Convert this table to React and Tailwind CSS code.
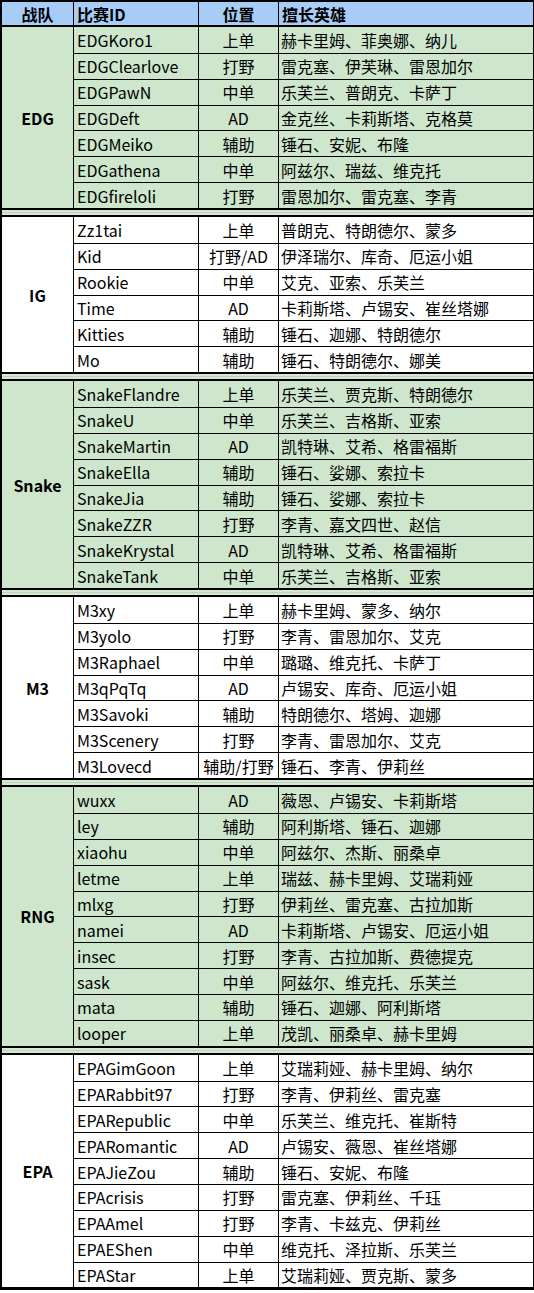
import React from "react";

const groups = [
  {
    team: "EDG",
    green: true,
    rows: [
      ["EDGKoro1", "上单", "赫卡里姆、菲奥娜、纳儿"],
      ["EDGClearlove", "打野", "雷克塞、伊芙琳、雷恩加尔"],
      ["EDGPawN", "中单", "乐芙兰、普朗克、卡萨丁"],
      ["EDGDeft", "AD", "金克丝、卡莉斯塔、克格莫"],
      ["EDGMeiko", "辅助", "锤石、安妮、布隆"],
      ["EDGathena", "中单", "阿兹尔、瑞兹、维克托"],
      ["EDGfireloli", "打野", "雷恩加尔、雷克塞、李青"],
    ],
  },
  {
    team: "IG",
    green: false,
    rows: [
      ["Zz1tai", "上单", "普朗克、特朗德尔、蒙多"],
      ["Kid", "打野/AD", "伊泽瑞尔、库奇、厄运小姐"],
      ["Rookie", "中单", "艾克、亚索、乐芙兰"],
      ["Time", "AD", "卡莉斯塔、卢锡安、崔丝塔娜"],
      ["Kitties", "辅助", "锤石、迦娜、特朗德尔"],
      ["Mo", "辅助", "锤石、特朗德尔、娜美"],
    ],
  },
  {
    team: "Snake",
    green: true,
    rows: [
      ["SnakeFlandre", "上单", "乐芙兰、贾克斯、特朗德尔"],
      ["SnakeU", "中单", "乐芙兰、吉格斯、亚索"],
      ["SnakeMartin", "AD", "凯特琳、艾希、格雷福斯"],
      ["SnakeElla", "辅助", "锤石、娑娜、索拉卡"],
      ["SnakeJia", "辅助", "锤石、娑娜、索拉卡"],
      ["SnakeZZR", "打野", "李青、嘉文四世、赵信"],
      ["SnakeKrystal", "AD", "凯特琳、艾希、格雷福斯"],
      ["SnakeTank", "中单", "乐芙兰、吉格斯、亚索"],
    ],
  },
  {
    team: "M3",
    green: false,
    rows: [
      ["M3xy", "上单", "赫卡里姆、蒙多、纳尔"],
      ["M3yolo", "打野", "李青、雷恩加尔、艾克"],
      ["M3Raphael", "中单", "璐璐、维克托、卡萨丁"],
      ["M3qPqTq", "AD", "卢锡安、库奇、厄运小姐"],
      ["M3Savoki", "辅助", "特朗德尔、塔姆、迦娜"],
      ["M3Scenery", "打野", "李青、雷恩加尔、艾克"],
      ["M3Lovecd", "辅助/打野", "锤石、李青、伊莉丝"],
    ],
  },
  {
    team: "RNG",
    green: true,
    rows: [
      ["wuxx", "AD", "薇恩、卢锡安、卡莉斯塔"],
      ["ley", "辅助", "阿利斯塔、锤石、迦娜"],
      ["xiaohu", "中单", "阿兹尔、杰斯、丽桑卓"],
      ["letme", "上单", "瑞兹、赫卡里姆、艾瑞莉娅"],
      ["mlxg", "打野", "伊莉丝、雷克塞、古拉加斯"],
      ["namei", "AD", "卡莉斯塔、卢锡安、厄运小姐"],
      ["insec", "打野", "李青、古拉加斯、费德提克"],
      ["sask", "中单", "阿兹尔、维克托、乐芙兰"],
      ["mata", "辅助", "锤石、迦娜、阿利斯塔"],
      ["looper", "上单", "茂凯、丽桑卓、赫卡里姆"],
    ],
  },
  {
    team: "EPA",
    green: false,
    rows: [
      ["EPAGimGoon", "上单", "艾瑞莉娅、赫卡里姆、纳尔"],
      ["EPARabbit97", "打野", "李青、伊莉丝、雷克塞"],
      ["EPARepublic", "中单", "乐芙兰、维克托、崔斯特"],
      ["EPARomantic", "AD", "卢锡安、薇恩、崔丝塔娜"],
      ["EPAJieZou", "辅助", "锤石、安妮、布隆"],
      ["EPAcrisis", "打野", "雷克塞、伊莉丝、千珏"],
      ["EPAAmel", "打野", "李青、卡兹克、伊莉丝"],
      ["EPAEShen", "中单", "维克托、泽拉斯、乐芙兰"],
      ["EPAStar", "上单", "艾瑞莉娅、贾克斯、蒙多"],
    ],
  },
];

function Group({ team, green, rows, last }) {
  return (
    <div
      className={`flex border-black ${last ? "border-b-[3px]" : "border-b-2"} ${
        green ? "bg-[#cde6cc]" : "bg-white"
      }`}
    >
      <div className="w-[72px] shrink-0 border-r border-black flex items-center justify-center font-bold">
        {team}
      </div>
      <div className="flex-1 flex flex-col">
        {rows.map(([id, pos, heroes], i) => (
          <div
            key={id}
            className={`flex h-[25.87px] ${i > 0 ? "border-t border-black" : ""}`}
          >
            <div className="w-[125px] shrink-0 border-r border-black pl-[3px] flex items-center whitespace-nowrap">
              {id}
            </div>
            <div className="w-[80px] shrink-0 border-r border-black flex items-center justify-center whitespace-nowrap">
              {pos}
            </div>
            <div className="flex-1 pl-[2px] flex items-center whitespace-nowrap">
              {heroes}
            </div>
          </div>
        ))}
      </div>
    </div>
  );
}

export default function App() {
  return (
    <div className="w-[534px] bg-white font-['Noto_Sans_CJK_SC',sans-serif] text-[16px] leading-none text-black">
      <div className="border-t-2 border-l-2 border-r border-black">
        <div className="flex h-[25px] bg-[#a7cdf7] border-b-2 border-black font-bold">
          <div className="w-[72px] shrink-0 border-r border-black flex items-center justify-center">
            战队
          </div>
          <div className="w-[125px] shrink-0 border-r border-black pl-[3px] flex items-center">
            比赛ID
          </div>
          <div className="w-[80px] shrink-0 border-r border-black flex items-center justify-center">
            位置
          </div>
          <div className="flex-1 pl-[3px] flex items-center">擅长英雄</div>
        </div>
        {groups.map((g, gi) => (
          <React.Fragment key={g.team}>
            <Group {...g} last={gi === groups.length - 1} />
            {gi < groups.length - 1 && (
              <div className="h-[7px] border-b-2 border-black bg-[#d6e8d3] flex flex-col justify-center">
                <div className="h-px bg-[#bfd3bc]" />
              </div>
            )}
          </React.Fragment>
        ))}
      </div>
    </div>
  );
}
